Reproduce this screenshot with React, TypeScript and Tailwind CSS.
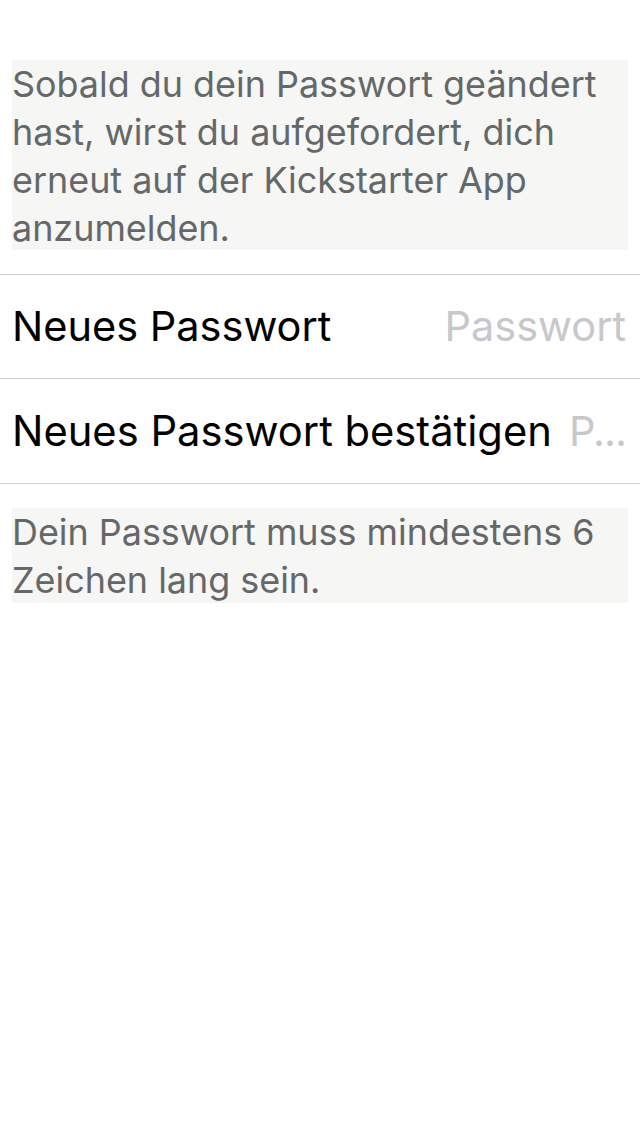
export default function App() {
  const font = { fontFamily: 'Inter, Roboto, "Noto Sans", sans-serif' };
  return (
    <div className="w-[640px] h-[1136px] bg-white" style={font}>
      <div className="pt-[60px]">
        <div className="mx-[12px] bg-[#f6f6f5] text-[#646868] text-[35.9px] leading-[48px] h-[190px]">
          Sobald du dein Passwort geändert hast, wirst du aufgefordert, dich erneut auf der Kickstarter App anzumelden.
        </div>
      </div>
      <div className="mt-[24px] border-t border-[#cfcfd1]">
        <div className="h-[104px] flex items-center justify-between pl-[12px] pr-[14px] border-b border-[#cfcfd1]">
          <span className="text-[41.5px] text-black">Neues Passwort</span>
          <span className="text-[41.5px] text-[#c7c7cc]">Passwort</span>
        </div>
        <div className="h-[105px] flex items-center justify-between pl-[12px] pr-[14px] border-b border-[#cfcfd1]">
          <span className="text-[41.7px] text-black whitespace-nowrap">Neues Passwort bestätigen</span>
          <span className="text-[41.5px] text-[#c7c7cc] whitespace-nowrap tracking-[-1px]">P...</span>
        </div>
      </div>
      <div className="mt-[24px] mx-[12px] bg-[#f6f6f5] text-[#646868] text-[35.9px] leading-[48px] h-[95px]">
        Dein Passwort muss mindestens 6 Zeichen lang sein.
      </div>
    </div>
  );
}
